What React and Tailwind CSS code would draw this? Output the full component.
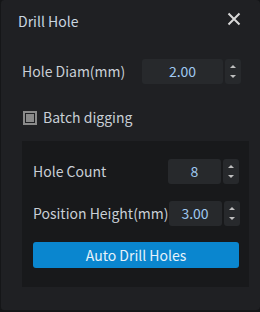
import React from "react";

function Spinner() {
  return (
    <div className="w-[16px] h-[25px] bg-[#27292c] rounded-[3px] flex flex-col items-center justify-between py-[5px]">
      <svg width="8" height="5" viewBox="0 0 8 5"><path d="M1 4L4 1L7 4Z" fill="#bfbfbf" /></svg>
      <svg width="8" height="5" viewBox="0 0 8 5"><path d="M1 1L4 4L7 1Z" fill="#bfbfbf" /></svg>
    </div>
  );
}

function NumInput({ value, w }) {
  return (
    <div className="flex items-center gap-[2px]">
      <div className={`${w} h-[25px] bg-[#27292c] rounded-[3px] flex items-center justify-center text-[14px] text-[#9fc8f0]`}>
        {value}
      </div>
      <Spinner />
    </div>
  );
}

export default function App() {
  return (
    <div className="w-[260px] h-[312px] bg-[#141517]" style={{ fontFamily: '"Noto Sans CJK SC", "Noto Sans", sans-serif' }}>
      <div className="w-[260px] h-[311px] bg-[#1f2023] rounded-[4px] border-l border-b border-[#151618] flex flex-col">
        <div className="flex items-center justify-between pl-[17px] pr-[19px] pt-[8px] h-[34px]">
          <span className="text-[14px] text-[#c9d6e0] leading-none">Drill Hole</span>
          <svg width="14" height="14" viewBox="0 0 14 14" className="mt-[-4px]">
            <path d="M1.5 1.5L12.5 12.5M12.5 1.5L1.5 12.5" stroke="#d8d8d8" strokeWidth="2" />
          </svg>
        </div>
        <div className="flex items-center justify-between pl-[21px] pr-[19px] mt-[25px]">
          <span className="text-[14px] text-[#c9cfd6] whitespace-nowrap">Hole Diam(mm)</span>
          <NumInput value="2.00" w="w-[81px]" />
        </div>
        <div className="flex items-center pl-[22px] mt-[23px] gap-[6px]">
          <div className="w-[14px] h-[14px] border-[2px] border-[#8a8a8a] flex items-center justify-center">
            <div className="w-[8px] h-[8px] bg-[#8a8a8a]" />
          </div>
          <span className="text-[14px] text-[#c9cfd6]">Batch digging</span>
        </div>
        <div className="ml-[21px] mr-[11px] mt-[13px] h-[146px] bg-[#18191b] pl-[11px] pr-[10px] pt-[18px] flex flex-col">
          <div className="flex items-center justify-between">
            <span className="text-[14px] text-[#c9cfd6] whitespace-nowrap">Hole Count</span>
            <NumInput value="8" w="w-[53px]" />
          </div>
          <div className="flex items-center justify-between mt-[17px]">
            <span className="text-[14px] text-[#c9cfd6] whitespace-nowrap">Position Height(mm)</span>
            <NumInput value="3.00" w="w-[53px]" />
          </div>
          <div className="mt-[16px] h-[26px] rounded-[3px] bg-[#0a86cf] flex items-center justify-center text-[14px] text-[#e6f2fa]">
            Auto Drill Holes
          </div>
        </div>
      </div>
    </div>
  );
}
